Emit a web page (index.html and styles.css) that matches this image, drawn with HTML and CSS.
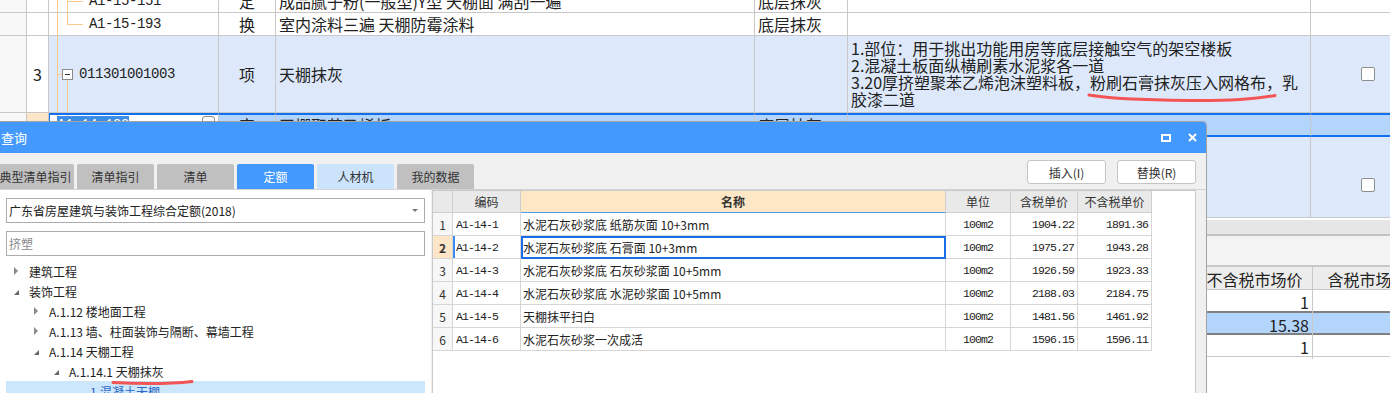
FILE: index.html
```html
<!DOCTYPE html>
<html lang="zh-CN">
<head>
    <meta charset="UTF-8">
    <meta name="viewport" content="width=device-width, initial-scale=1.0">
    <title>查询</title>
    <link rel="stylesheet" href="styles.css">
</head>
<body>

    <div class="app">
        <div class="grid">
            <div class="row r1">
                <div class="c gut"></div>
                <div class="c no"></div>
                <div class="c code"><span class="code-txt">A1-15-151</span></div>
                <div class="c type">定</div>
                <div class="c name">成品腻子粉(一般型)Y型 天棚面 满刮一遍</div>
                <div class="c unit">底层抹灰</div>
                <div class="c feat"></div>
                <div class="c chk"></div>
            </div>
            <div class="row r2">
                <div class="c gut"></div>
                <div class="c no"></div>
                <div class="c code"><span class="code-txt">A1-15-193</span></div>
                <div class="c type">换</div>
                <div class="c name">室内涂料三遍 天棚防霉涂料</div>
                <div class="c unit">底层抹灰</div>
                <div class="c feat"></div>
                <div class="c chk"></div>
            </div>
            <div class="row r3 hl">
                <div class="c gut"></div>
                <div class="c no">3</div>
                <div class="c code"><span class="tog"></span><span class="code-txt">011301001003</span></div>
                <div class="c type">项</div>
                <div class="c name">天棚抹灰</div>
                <div class="c unit"></div>
                <div class="c feat">
                    <div>1.部位：用于挑出功能用房等底层接触空气的架空楼板<br>2.混凝土板面纵横刷素水泥浆各一道<br>3.20厚挤塑聚苯乙烯泡沫塑料板，粉刷石膏抹灰压入网格布，乳<br>胶漆二道</div>
                </div>
                <div class="c chk"><span class="box"></span></div>
            </div>
            <div class="row r4">
                <div class="c gut"></div>
                <div class="c no"></div>
                <div class="c code"><span class="code-txt pick">A1-14-199</span><span class="drop"></span></div>
                <div class="c type">定</div>
                <div class="c name">天棚聚苯乙烯板</div>
                <div class="c unit">底层抹灰</div>
                <div class="c feat"></div>
                <div class="c chk"></div>
            </div>
            <div class="row r5 hl">
                <div class="c gut"></div>
                <div class="c no"></div>
                <div class="c code"></div>
                <div class="c type"></div>
                <div class="c name"></div>
                <div class="c unit"></div>
                <div class="c feat"></div>
                <div class="c chk"><span class="box"></span></div>
            </div>
        </div>

        <div class="split"></div>
        <div class="subbar"></div>

        <div class="sub">
            <div class="sub-row sub-head">
                <div></div>
                <div>不含税市场价</div>
                <div>含税市场价</div>
            </div>
            <div class="sub-row sub-a">
                <div></div>
                <div>1</div>
                <div></div>
            </div>
            <div class="sub-row sub-sel">
                <div></div>
                <div>15.38</div>
                <div></div>
            </div>
            <div class="sub-row sub-c">
                <div></div>
                <div>1</div>
                <div></div>
            </div>
        </div>
    </div>

    <div class="dialog">
        <div class="dlg-title">
            <span>查询</span>
            <div class="dlg-ctrl">
                <span class="ic-max"></span>
                <svg class="ic-close" width="9" height="9" viewBox="0 0 9 9">
                    <path d="M1 1 L8 8 M8 1 L1 8" stroke="#fff" stroke-width="2" fill="none"/>
                </svg>
            </div>
        </div>

        <div class="toolbar">
            <div class="tabs">
                <div class="tab">典型清单指引</div>
                <div class="tab">清单指引</div>
                <div class="tab">清单</div>
                <div class="tab active">定额</div>
                <div class="tab soft">人材机</div>
                <div class="tab">我的数据</div>
            </div>
            <div class="actions">
                <button>插入(I)</button>
                <button>替换(R)</button>
            </div>
        </div>

        <div class="dlg-body">
            <div class="side">
                <div class="sel-box">
                    <span>广东省房屋建筑与装饰工程综合定额(2018)</span>
                    <span class="caret"></span>
                </div>
                <input class="search" type="text" placeholder="挤塑">
                <div class="tree">
                    <div class="ti l0"><span class="arr closed"></span>建筑工程</div>
                    <div class="ti l0"><span class="arr open"></span>装饰工程</div>
                    <div class="ti l1"><span class="arr closed"></span>A.1.12 楼地面工程</div>
                    <div class="ti l1"><span class="arr closed"></span>A.1.13 墙、柱面装饰与隔断、幕墙工程</div>
                    <div class="ti l1"><span class="arr open"></span>A.1.14 天棚工程</div>
                    <div class="ti l2"><span class="arr open"></span>A.1.14.1 天棚抹灰</div>
                    <div class="ti l3 cur">1.混凝土天棚</div>
                </div>
            </div>

            <div class="result">
                <div class="thead">
                    <div></div>
                    <div>编码</div>
                    <div class="h-name">名称</div>
                    <div>单位</div>
                    <div>含税单价</div>
                    <div>不含税单价</div>
                </div>
                <div class="trow">
                    <div class="t-idx">1</div>
                    <div class="t-code">A1-14-1</div>
                    <div class="t-name">水泥石灰砂浆底 纸筋灰面 10+3mm</div>
                    <div class="t-unit">100m2</div>
                    <div class="t-num">1904.22</div>
                    <div class="t-num">1891.36</div>
                </div>
                <div class="trow cur">
                    <div class="t-idx">2</div>
                    <div class="t-code">A1-14-2</div>
                    <div class="t-name">水泥石灰砂浆底 石膏面 10+3mm</div>
                    <div class="t-unit">100m2</div>
                    <div class="t-num">1975.27</div>
                    <div class="t-num">1943.28</div>
                </div>
                <div class="trow">
                    <div class="t-idx">3</div>
                    <div class="t-code">A1-14-3</div>
                    <div class="t-name">水泥石灰砂浆底 石灰砂浆面 10+5mm</div>
                    <div class="t-unit">100m2</div>
                    <div class="t-num">1926.59</div>
                    <div class="t-num">1923.33</div>
                </div>
                <div class="trow">
                    <div class="t-idx">4</div>
                    <div class="t-code">A1-14-4</div>
                    <div class="t-name">水泥石灰砂浆底 水泥砂浆面 10+5mm</div>
                    <div class="t-unit">100m2</div>
                    <div class="t-num">2188.03</div>
                    <div class="t-num">2184.75</div>
                </div>
                <div class="trow">
                    <div class="t-idx">5</div>
                    <div class="t-code">A1-14-5</div>
                    <div class="t-name">天棚抹平扫白</div>
                    <div class="t-unit">100m2</div>
                    <div class="t-num">1481.56</div>
                    <div class="t-num">1461.92</div>
                </div>
                <div class="trow">
                    <div class="t-idx">6</div>
                    <div class="t-code">A1-14-6</div>
                    <div class="t-name">水泥石灰砂浆一次成活</div>
                    <div class="t-unit">100m2</div>
                    <div class="t-num">1596.15</div>
                    <div class="t-num">1596.11</div>
                </div>
            </div>
        </div>
    </div>

    <svg class="marks" width="1390" height="393" viewBox="0 0 1390 393">
        <path d="M1089 95 C1110 99 1150 100 1190 100.5 S1255 99 1275 95.5"/>
        <path d="M113 382.5 C140 384 170 384 192 381.5"/>
    </svg>

</body>
</html>
```

FILE: styles.css
```css
* {
    margin: 0;
    padding: 0;
    box-sizing: border-box;
}

body {
    width: 1390px;
    height: 393px;
    overflow: hidden;
    position: relative;
    background: #fff;
    font-family: "Noto Sans CJK SC", sans-serif;
    color: #222;
}

.app {
    width: 1390px;
    height: 393px;
    overflow: hidden;
}

/* main bill grid behind the dialog */
.grid {
    margin-top: -10px;
    width: 1425px;
}

.row {
    display: grid;
    grid-template-columns: 27px 22px 170px 57px 479px 93px 463px 114px;
    border-bottom: 1px solid #c8c8c8;
    font-size: 16px;
    line-height: 17px;
}

.r1, .r2 { height: 23px; }
.r3 { height: 77px; }
.r4 { height: 24px; border-bottom: none; }
.r5 { height: 81px; }

.c {
    display: flex;
    align-items: center;
    border-right: 1px solid #c8c8c8;
    white-space: nowrap;
    overflow: hidden;
}

.gut { background: #f8f8f8; }
.no, .type, .chk { justify-content: center; }
.name, .unit, .feat { padding-left: 3px; }

.code {
    --tl: #fcc98a;
}

.code-txt {
    font-family: "Liberation Mono", monospace;
    font-size: 14px;
    letter-spacing: -0.4px;
}

.r1 .code {
    padding-left: 40px;
    background:
        linear-gradient(var(--tl), var(--tl)) 8px 0 / 1px 100% no-repeat,
        linear-gradient(var(--tl), var(--tl)) 18px 0 / 1px 100% no-repeat,
        linear-gradient(var(--tl), var(--tl)) 18px 11px / 16px 1px no-repeat;
}

.r2 .code {
    padding-left: 40px;
    background:
        linear-gradient(var(--tl), var(--tl)) 8px 0 / 1px 100% no-repeat,
        linear-gradient(var(--tl), var(--tl)) 18px 0 / 1px 12px no-repeat,
        linear-gradient(var(--tl), var(--tl)) 18px 11px / 16px 1px no-repeat;
}

.r3 .code {
    padding-left: 13px;
    background:
        linear-gradient(var(--tl), var(--tl)) 8px 0 / 1px 100% no-repeat,
        linear-gradient(var(--tl), var(--tl)) 8px 38px / 5px 1px no-repeat,
        linear-gradient(var(--tl), var(--tl)) 18px 44px / 1px 100% no-repeat;
}

.r5 .code {
    background: linear-gradient(var(--tl), var(--tl)) 8px 0 / 1px 100% no-repeat;
}

.tog {
    position: relative;
    width: 11px;
    height: 11px;
    margin-right: 6px;
    border: 1px solid #8a8a8a;
    background: #fff;
}

.tog::after {
    content: "";
    position: absolute;
    left: 2px;
    top: 4px;
    width: 5px;
    height: 1px;
    background: #333;
}

.hl .c:nth-child(n+3) { background-color: #dde9fb; }

.r4 .no { background: #fde5c8; }

.r4 .c:nth-child(n+3) {
    border-top: 2px solid #1170ef;
    border-bottom: 2px solid #1170ef;
    background-color: #b3d4fb;
}

.r4 .c.code {
    align-items: flex-start;
    padding: 1px 0 0 7px;
    border-left: 1px solid #1170ef;
    background:
        linear-gradient(var(--tl), var(--tl)) 7px 0 / 1px 100% no-repeat,
        linear-gradient(var(--tl), var(--tl)) 17px 0 / 1px 12px no-repeat,
        #fff;
}

.pick {
    background: #3b8de8;
    color: #fff;
    line-height: 18px;
}

.drop {
    margin: 0 3px 0 auto;
    width: 13px;
    height: 15px;
    border: 1px solid #8a8a8a;
    border-radius: 3px;
    background: #fafafa;
}

.r5 .chk {
    align-items: flex-start;
    padding-top: 41px;
}

.box {
    width: 14px;
    height: 14px;
    border: 1px solid #8e8e8e;
    border-radius: 2px;
    background: #fff;
}

.split {
    height: 18px;
    border-top: 2px solid #fff;
    border-bottom: 2px solid #c2c2c2;
    background: #e6e6e6;
}

.subbar {
    height: 29px;
    background: #f3f3f3;
}

/* lower price grid */
.sub {
    width: 1423px;
    font-size: 16px;
}

.sub-row {
    display: grid;
    grid-template-columns: 1197px 116px 110px;
    border-bottom: 1px solid #c8c8c8;
}

.sub-row > div {
    display: flex;
    align-items: center;
    justify-content: flex-end;
    padding-right: 3px;
    border-right: 1px solid #c8c8c8;
    white-space: nowrap;
}

.sub-head {
    height: 25px;
    border-top: 2px solid #c8c8c8;
    background: #ececec;
}

.sub-head > div {
    justify-content: center;
    padding: 0;
}

.sub-a { height: 21px; border-bottom: none; }

.sub-sel {
    height: 24px;
    border-top: 2px solid #808080;
    border-bottom: 2px solid #808080;
    background: #b3d4fb;
}

.sub-c { height: 22px; }

/* query dialog */
.dialog {
    position: absolute;
    left: -8px;
    top: 121px;
    z-index: 5;
    width: 1215px;
    height: 290px;
    background: #f0f0f0;
    border: 1px solid #a3a3a3;
    border-radius: 0 4px 0 0;
    font-size: 12px;
    color: #333;
}

.dlg-title {
    height: 31px;
    display: flex;
    align-items: center;
    justify-content: space-between;
    padding: 0 9px 0 8px;
    background: #4499ff;
    color: #fff;
    font-size: 13px;
    border-radius: 0 3px 0 0;
}

.dlg-ctrl {
    display: flex;
    align-items: center;
}

.ic-max {
    width: 10px;
    height: 8px;
    margin-right: 17px;
    border: 2px solid #fff;
}

.ic-close {
    display: block;
}

.toolbar {
    height: 37px;
    display: flex;
    justify-content: space-between;
    align-items: flex-end;
    padding: 0 10px 0 4px;
    border-bottom: 1px solid #d4d4d4;
}

.tabs {
    display: flex;
    gap: 3px;
}

.tab {
    width: 77px;
    height: 25px;
    display: flex;
    align-items: center;
    justify-content: center;
    background: #c0c0c0;
    border-radius: 2px 2px 0 0;
    color: #333;
}

.tab.active {
    background: #4499ff;
    color: #fff;
}

.tab.soft {
    background: #cbe4fc;
}

.actions {
    display: flex;
    gap: 11px;
    align-self: center;
    margin-top: 2px;
}

button {
    width: 79px;
    height: 24px;
    background: #fff;
    border: 1px solid #c5c5c5;
    border-radius: 3px;
    font-family: "Noto Sans CJK SC", sans-serif;
    font-size: 12px;
    color: #333;
}

.dlg-body {
    display: flex;
    height: 220px;
    padding-left: 4px;
}

.side {
    width: 434px;
    padding: 8px 6px 0 9px;
    background: #fff;
}

.sel-box {
    height: 25px;
    display: flex;
    align-items: center;
    justify-content: space-between;
    padding: 0 6px 0 2px;
    border: 1px solid #acacac;
    color: #222;
}

.caret {
    width: 0;
    height: 0;
    border-left: 3px solid transparent;
    border-right: 3px solid transparent;
    border-top: 3px solid #777;
}

.search {
    display: block;
    width: 100%;
    height: 25px;
    margin-top: 8px;
    padding-left: 2px;
    border: 1px solid #acacac;
    font-family: "Noto Sans CJK SC", sans-serif;
    font-size: 12px;
    outline: none;
}

.search::placeholder {
    color: #8a8a8a;
}

.tree {
    margin-top: 5px;
    color: #222;
}

.ti {
    height: 20px;
    display: flex;
    align-items: center;
    white-space: nowrap;
}

.l0 { padding-left: 8px; }
.l1 { padding-left: 28px; }
.l2 { padding-left: 48px; }
.l3 { padding-left: 84px; }

.arr {
    width: 15px;
    flex: none;
    display: flex;
    align-items: center;
}

.arr::before {
    content: "";
    width: 0;
    height: 0;
}

.arr.closed::before {
    border-left: 4px solid #8a8a8a;
    border-top: 4px solid transparent;
    border-bottom: 4px solid transparent;
}

.arr.open::before {
    border-bottom: 5px solid #666;
    border-left: 5px solid transparent;
    margin-top: 3px;
}

.ti.cur {
    background: #cce6fb;
    color: #2c66c6;
}

.result {
    width: 764px;
    margin-left: 1px;
    background: #fff;
    border: 1px solid #c9c9c9;
}

.thead, .trow {
    display: grid;
    grid-template-columns: 20px 68px 425px 65px 67px 74px;
}

.thead { height: 22px; }
.trow { height: 23px; }

.thead > div {
    display: flex;
    align-items: center;
    justify-content: center;
    background: #e9e9e9;
    border-right: 1px solid #cfcfcf;
    border-bottom: 1px solid #cfcfcf;
}

.thead .h-name {
    background: #fde7c5;
    font-weight: bold;
    border-bottom-color: #4aa0f5;
}

.trow > div {
    display: flex;
    align-items: center;
    white-space: nowrap;
    border-right: 1px solid #d6d6d6;
    border-bottom: 1px solid #d6d6d6;
}

.t-idx {
    justify-content: center;
    background: #f7f7f7;
}

.t-code, .t-unit, .t-num {
    font-family: "Liberation Mono", monospace;
    font-size: 11.5px;
    letter-spacing: -0.9px;
    color: #222;
}

.t-code { padding-left: 3px; }
.t-name { padding-left: 2px; color: #222; }
.t-unit { justify-content: center; }
.t-num { justify-content: flex-end; padding-right: 3px; }

.trow.cur .t-idx {
    background: #fde5c8;
    font-weight: bold;
}

.trow.cur .t-code {
    box-shadow: inset 2px 0 #3a8cf0;
}

.trow.cur .t-name {
    outline: 2px solid #1a6de6;
    outline-offset: -2px;
}

/* hand-drawn red marks on top */
.marks {
    position: absolute;
    left: 0;
    top: 0;
    z-index: 10;
    pointer-events: none;
}

.marks path {
    fill: none;
    stroke: #f25555;
    stroke-width: 3;
    stroke-linecap: round;
}
```
